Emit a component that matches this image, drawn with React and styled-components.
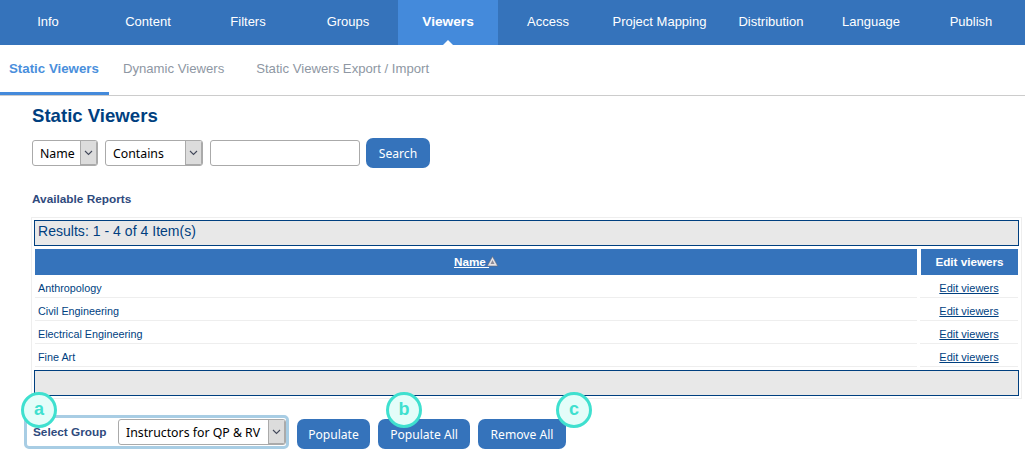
import React from "react";
import styled, {createGlobalStyle} from "styled-components";

const navItems = ["Info", "Content", "Filters", "Groups", "Viewers", "Access", "Project Mapping", "Distribution", "Language", "Publish"];
const subTabs = [
  {label: "Static Viewers", active: true},
  {label: "Dynamic Viewers"},
  {label: "Static Viewers Export / Import"},
];
const reports = ["Anthropology", "Civil Engineering", "Electrical Engineering", "Fine Art"];

const Chevron = () => (
  <svg width="9" height="6" viewBox="0 0 9 6" fill="none">
    <path d="M1 1l3.5 3.5L8 1" stroke="#444a5c" strokeWidth="1.1"/>
  </svg>
);

const SortIcon = () => (
  <SortSvg width="11" height="11" viewBox="0 0 11 11">
    <path d="M5.5 0.5L10.7 10H0.3z" fill="#e6e4e8" stroke="#6a6872" strokeWidth="0.6"/>
    <path d="M5.5 4L7.5 8H3.5z" fill="#8d8b96"/>
  </SortSvg>
);

const Select = ({value, width, arrow = 17}) => (
  <SelectBox $width={width}>
    <SelectValue>{value}</SelectValue>
    <SelectArrow $width={arrow}><Chevron/></SelectArrow>
  </SelectBox>
);

const App = () => {
  return <>
    <GlobalStyle/>
    <Nav>
      {navItems.map(item => <NavItem key={item} $active={item === "Viewers"}>{item}</NavItem>)}
    </Nav>
    <Tabs>
      {subTabs.map(tab => <Tab key={tab.label} $active={tab.active}>{tab.label}</Tab>)}
    </Tabs>
    <Content>
      <Title>Static Viewers</Title>
      <SearchRow>
        <Select value="Name" width="66px"/>
        <Select value="Contains" width="98px"/>
        <SearchInput/>
        <Button $width="64px">Search</Button>
      </SearchRow>
      <SectionLabel>Available Reports</SectionLabel>
      <TableFrame>
        <Bar>Results: 1 - 4 of 4 Item(s)</Bar>
        <Grid>
          <HeadCell><HeadLink>Name </HeadLink><SortIcon/></HeadCell>
          <HeadCell>Edit viewers</HeadCell>
          {reports.map(report => <React.Fragment key={report}>
            <NameCell>{report}</NameCell>
            <EditCell><EditLink>Edit viewers</EditLink></EditCell>
          </React.Fragment>)}
        </Grid>
        <Bar/>
      </TableFrame>
      <Actions>
        <GroupBox>
          <Badge $left="-6px" $top="-26px">a</Badge>
          <GroupLabel>Select Group</GroupLabel>
          <Select value="Instructors for QP &amp; RV" width="168px"/>
        </GroupBox>
        <Button $width="73px">Populate</Button>
        <Button $width="92px">Populate All<Badge $left="8px" $top="-27px">b</Badge></Button>
        <Button $width="88px">Remove All<Badge $left="78px" $top="-27px">c</Badge></Button>
      </Actions>
    </Content>
  </>
};

const GlobalStyle = createGlobalStyle`
  html, body {
    margin: 0;
    background: #fff;
    font-family: "Liberation Sans", Arial, sans-serif;
    overflow: hidden;
  }
`;
const Nav = styled.nav`
  display: flex;
  height: 45px;
  background: #3573bb;
  margin-left: -2px;
`;
const NavItem = styled.div`
  position: relative;
  flex: none;
  min-width: 100px;
  padding: 0 14.5px;
  box-sizing: border-box;
  line-height: 43px;
  text-align: center;
  font-size: ${p => p.$active ? "13.7px" : "13px"};
  color: #fff;
  font-weight: ${p => p.$active ? "bold" : "normal"};
  background: ${p => p.$active ? "#448adb" : "transparent"};
  &::after {
    content: "";
    display: ${p => p.$active ? "block" : "none"};
    position: absolute;
    left: 50%;
    bottom: 0;
    margin-left: -5px;
    border: 5px solid transparent;
    border-top: 0;
    border-bottom-color: #fff;
  }
`;
const Tabs = styled.div`
  display: flex;
  height: 50px;
  border-bottom: 1px solid #ccc;
`;
const Tab = styled.div`
  height: 50px;
  box-sizing: border-box;
  padding: 16px 10px 0 9px;
  margin-right: ${p => p.$active ? "5px" : "13px"};
  font-size: ${p => p.$active ? "13.3px" : "13.15px"};
  line-height: 16px;
  font-weight: ${p => p.$active ? "bold" : "normal"};
  color: ${p => p.$active ? "#4a8fdc" : "#8e97a3"};
  border-bottom: 3px solid ${p => p.$active ? "#448adb" : "transparent"};
`;
const Content = styled.div`
  padding: 0 3px 0 31px;
`;
const Title = styled.h1`
  margin: 9px 0 0 1px;
  font-size: 18.6px;
  line-height: 22px;
  font-weight: bold;
  color: #003f7f;
`;
const SearchRow = styled.div`
  display: flex;
  align-items: center;
  gap: 7px;
  margin: 11px 0 0 1px;
  height: 30px;
`;
const SelectBox = styled.div`
  display: flex;
  flex: none;
  width: ${p => p.$width};
  height: 26px;
  box-sizing: border-box;
  border: 1px solid #aaa;
  border-radius: 3px;
  background: #fff;
  overflow: hidden;
`;
const SelectValue = styled.span`
  flex: 1;
  padding-left: 7px;
  font-family: "Noto Sans", Tahoma, sans-serif;
  font-size: 12.3px;
  line-height: 25px;
  color: #000;
  white-space: nowrap;
`;
const SelectArrow = styled.span`
  display: flex;
  align-items: center;
  justify-content: center;
  width: ${p => p.$width}px;
  box-sizing: border-box;
  background: #dcdcdc;
  border-left: 1px solid #aaa;
  border-right: 1px solid #aaa;
  border-bottom: 1px solid #aaa;
`;
const SearchInput = styled.input`
  width: 150px;
  height: 26px;
  box-sizing: border-box;
  border: 1px solid #aaa;
  border-radius: 3px;
  margin: 0 -1px 0 0;
`;
const Button = styled.button`
  position: relative;
  flex: none;
  width: ${p => p.$width};
  height: 30px;
  padding: 0;
  border: 0;
  border-radius: 7px;
  background: #3573bb;
  color: #fff;
  font-family: "Noto Sans", Tahoma, sans-serif;
  font-size: 12.1px;
`;
const SectionLabel = styled.div`
  margin: 24px 0 0 1px;
  font-size: 11.8px;
  line-height: 14px;
  font-weight: bold;
  color: #2f4a7d;
`;
const TableFrame = styled.div`
  display: flex;
  flex-direction: column;
  margin-top: 11px;
  padding: 2px;
  border: 1px solid #eee;
  width: 985px;
`;
const Bar = styled.div`
  height: 26px;
  box-sizing: border-box;
  padding-left: 3px;
  border: 1px solid #003f7f;
  background: #e8e8e8;
  color: #003f7f;
  font-size: 14px;
  letter-spacing: 0.03px;
  line-height: 21px;
`;
const Grid = styled.div`
  display: grid;
  grid-template-columns: 882px 97px;
  column-gap: 4px;
  padding: 3px 0 3px 1px;
  grid-auto-rows: 23px;
  grid-template-rows: 26px;
`;
const HeadCell = styled.div`
  background: #3573bb;
  color: #fff;
  font-size: 11.7px;
  font-weight: bold;
  line-height: 26px;
  text-align: center;
`;
const HeadLink = styled.span`
  text-decoration: underline;
  white-space: pre;
`;
const SortSvg = styled.svg`
  margin-left: -2px;
  vertical-align: -1px;
`;
const NameCell = styled.div`
  box-sizing: border-box;
  padding: 1px 0 0 3px;
  border-bottom: 1px solid #eee;
  color: #003f7f;
  font-size: 10.8px;
  line-height: 24px;
`;
const EditCell = styled(NameCell)`
  margin-left: -1px;
  padding: 1px 0 0;
  font-size: 11px;
  text-align: center;
`;
const EditLink = styled.span`
  text-decoration: underline;
`;
const Actions = styled.div`
  display: flex;
  align-items: flex-end;
  gap: 8px;
  margin: 16px 0 0 -7px;
`;
const GroupBox = styled.div`
  position: relative;
  display: flex;
  align-items: center;
  gap: 13px;
  flex: none;
  width: 265px;
  height: 34px;
  box-sizing: border-box;
  padding: 0 0 0 6px;
  border: 3px solid #a8cde4;
  border-radius: 5px;
`;
const GroupLabel = styled.span`
  flex: none;
  width: 72px;
  font-size: 11.8px;
  font-weight: bold;
  color: #2f4a7d;
  white-space: nowrap;
`;
const Badge = styled.span`
  position: absolute;
  top: ${p => p.$top};
  left: ${p => p.$left};
  width: 36px;
  height: 36px;
  box-sizing: border-box;
  border: 3px solid #3fe0cf;
  border-radius: 50%;
  background: #e4fdf9;
  color: #3fe0cf;
  font-family: "Liberation Sans", Arial, sans-serif;
  font-size: 18px;
  font-weight: bold;
  line-height: 29px;
  text-align: center;
`;

export default App;
